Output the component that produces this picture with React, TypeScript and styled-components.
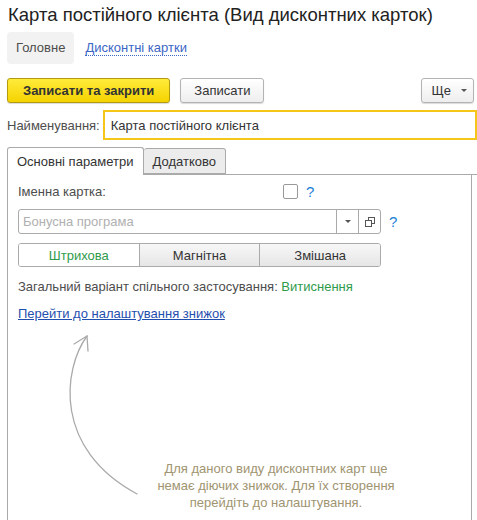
import styled, { createGlobalStyle } from "styled-components";

const GlobalStyle = createGlobalStyle`
  body {
    margin: 0;
    background: #fff;
    font-family: "Liberation Sans", Arial, sans-serif;
    font-size: 13px;
    color: #4d4d4d;
  }
`;

const Page = styled.div`
  width: 477px;
  height: 520px;
  overflow: hidden;
  padding: 4px 0 0 7px;
  box-sizing: border-box;
`;

const Title = styled.h1`
  margin: 0 0 6px 1px;
  font-size: 18.5px;
  line-height: 22px;
  font-weight: normal;
  color: #222;
  white-space: nowrap;
`;

const NavBar = styled.div`
  display: flex;
  align-items: center;
  gap: 11px;
  height: 32px;
`;

const NavItem = styled.div<{ $active?: boolean }>`
  height: 32px;
  display: flex;
  align-items: center;
  padding: ${(p) => (p.$active ? "0 9px" : "0")};
  background: ${(p) => (p.$active ? "#f2f2f2" : "transparent")};
  border-radius: 4px;
  color: ${(p) => (p.$active ? "#4d4d4d" : "#3b66c4")};
  span {
    border-bottom: ${(p) => (p.$active ? "none" : "1px dotted #3b66c4")};
    line-height: 14px;
  }
`;

const Toolbar = styled.div`
  display: flex;
  align-items: center;
  gap: 10px;
  margin-top: 14px;
  padding-right: 3px;
`;

const Button = styled.button<{ $primary?: boolean }>`
  height: 25px;
  padding: 0 ${(p) => (p.$primary ? "15px" : "13px")};
  font-family: inherit;
  font-size: 13px;
  font-weight: ${(p) => (p.$primary ? "bold" : "normal")};
  color: #333;
  border-radius: 3px;
  border: 1px solid ${(p) => (p.$primary ? "#b29b0f" : "#b3b3b3")};
  background: ${(p) =>
    p.$primary
      ? "linear-gradient(#ffeb3b, #f5d300)"
      : "linear-gradient(#ffffff, #eeeeee)"};
  box-shadow: 0 1px 1px rgba(0, 0, 0, 0.15);
  display: flex;
  align-items: center;
`;

const MenuButton = styled(Button)`
  padding: 0 6px 0 10px;
  gap: 10px;
`;

const Spacer = styled.div`
  flex: 1;
`;

const Caret = styled.span`
  width: 0;
  height: 0;
  border-left: 3px solid transparent;
  border-right: 3px solid transparent;
  border-top: 3px solid #555;
`;

const FieldRow = styled.div`
  display: flex;
  align-items: center;
  gap: 3px;
  margin-top: 7px;
`;

const NameInput = styled.div`
  flex: 1;
  height: 30px;
  box-sizing: border-box;
  border: 2px solid #f5c518;
  display: flex;
  align-items: center;
  padding: 0 6px;
  color: #333;
`;

const TabStrip = styled.div`
  display: flex;
  margin-top: 7px;
  height: 28px;
  padding-right: 5px;
  border-bottom: 1px solid #aaa;
  box-sizing: border-box;
`;

const Tab = styled.div<{ $active?: boolean }>`
  height: ${(p) => (p.$active ? "28px" : "26px")};
  margin-top: ${(p) => (p.$active ? "0" : "1px")};
  box-sizing: border-box;
  padding: 0 9px;
  display: flex;
  align-items: center;
  border: 1px solid #aaa;
  border-bottom: ${(p) => (p.$active ? "none" : "1px solid #aaa")};
  border-left: ${(p) => (p.$active ? "1px solid #aaa" : "none")};
  border-radius: 3px 3px 0 0;
  background: ${(p) => (p.$active ? "#fff" : "#ececec")};
  color: #333;
`;

const Panel = styled.div`
  margin-right: 5px;
  height: 400px;
  border-left: 1px solid #aaa;
  border-right: 1px solid #aaa;
  padding: 6px 0 0 10px;
  display: flex;
  flex-direction: column;
`;

const CheckRow = styled.div`
  display: flex;
  align-items: center;
  height: 20px;
`;

const Label = styled.div`
  width: 265px;
`;

const Checkbox = styled.div`
  width: 13px;
  height: 13px;
  border: 1px solid #999;
  border-radius: 2px;
  background: #fff;
`;

const Help = styled.span`
  color: #1c7fd6;
  font-size: 15px;
  margin-left: 8px;
`;

const ComboRow = styled.div`
  display: flex;
  align-items: center;
  margin-top: 8px;
`;

const Combo = styled.div`
  width: 363px;
  height: 25px;
  box-sizing: border-box;
  border: 1px solid #aaa;
  border-radius: 3px;
  display: flex;
`;

const ComboText = styled.div`
  flex: 1;
  display: flex;
  align-items: center;
  padding-left: 4px;
  color: #b0b0b0;
`;

const ComboButton = styled.div`
  width: 21px;
  border-left: 1px solid #aaa;
  display: flex;
  align-items: center;
  justify-content: center;
`;

const Segments = styled.div`
  display: flex;
  width: 363px;
  height: 24px;
  margin-top: 9px;
  box-sizing: border-box;
  border: 1px solid #aaa;
  border-radius: 3px;
  overflow: hidden;
`;

const Segment = styled.div<{ $selected?: boolean }>`
  flex: 1;
  display: flex;
  align-items: center;
  justify-content: center;
  color: ${(p) => (p.$selected ? "#2e9b4b" : "#333")};
  background: ${(p) =>
    p.$selected ? "#fff" : "linear-gradient(#f7f7f7, #e6e6e6)"};
  & + & {
    border-left: 1px solid #aaa;
  }
`;

const InfoLine = styled.div`
  margin-top: 11px;
  line-height: 17px;
`;

const Accent = styled.span`
  color: #2e9b4b;
`;

const SettingsLink = styled.a`
  margin-top: 10px;
  line-height: 17px;
  color: #1f4fae;
  text-decoration: underline;
  align-self: flex-start;
`;

const EmptyState = styled.div`
  display: flex;
  align-items: flex-end;
  margin-top: 7px;
`;

const Hint = styled.div`
  width: 240px;
  margin-left: 8px;
  margin-bottom: -12px;
  text-align: center;
  line-height: 17px;
  color: #a09471;
`;

const App = () => {
  const segments = ["Штрихова", "Магнітна", "Змішана"];

  return (
    <>
      <GlobalStyle />
      <Page>
        <Title>Карта постійного клієнта (Вид дисконтних карток)</Title>
        <NavBar>
          <NavItem $active>
            <span>Головне</span>
          </NavItem>
          <NavItem>
            <span>Дисконтні картки</span>
          </NavItem>
        </NavBar>

        <Toolbar>
          <Button $primary>Записати та закрити</Button>
          <Button>Записати</Button>
          <Spacer />
          <MenuButton>
            Ще <Caret />
          </MenuButton>
        </Toolbar>

        <FieldRow>
          <span>Найменування:</span>
          <NameInput>Карта постійного клієнта</NameInput>
        </FieldRow>

        <TabStrip>
          <Tab $active>Основні параметри</Tab>
          <Tab>Додатково</Tab>
        </TabStrip>

        <Panel>
          <CheckRow>
            <Label>Іменна картка:</Label>
            <Checkbox />
            <Help>?</Help>
          </CheckRow>

          <ComboRow>
            <Combo>
              <ComboText>Бонусна програма</ComboText>
              <ComboButton>
                <Caret />
              </ComboButton>
              <ComboButton>
                <svg width="10" height="10" viewBox="0 0 10 10">
                  <rect x="3.5" y="0.5" width="6" height="6" fill="none" stroke="#555" />
                  <rect x="0.5" y="3.5" width="6" height="6" fill="#fff" stroke="#555" />
                </svg>
              </ComboButton>
            </Combo>
            <Help>?</Help>
          </ComboRow>

          <Segments>
            {segments.map((s, i) => (
              <Segment key={s} $selected={i === 0}>
                {s}
              </Segment>
            ))}
          </Segments>

          <InfoLine>
            Загальний варіант спільного застосування: <Accent>Витиснення</Accent>
          </InfoLine>

          <SettingsLink href="#">Перейти до налаштування знижок</SettingsLink>

          <EmptyState>
            {/* curved pointer from the hint up to the settings link */}
            <svg width="130" height="170" viewBox="0 0 130 170">
              <g fill="none" stroke="#aaa" strokeWidth="1.3" strokeLinecap="round">
                <path d="M69 7 C 45 40, 35 120, 119 165" />
                <path d="M56 15 L69 7 L70 22" />
              </g>
            </svg>
            <Hint>
              Для даного виду дисконтних карт ще немає діючих знижок. Для їх створення
              перейдіть до налаштування.
            </Hint>
          </EmptyState>
        </Panel>
      </Page>
    </>
  );
};

export default App;
